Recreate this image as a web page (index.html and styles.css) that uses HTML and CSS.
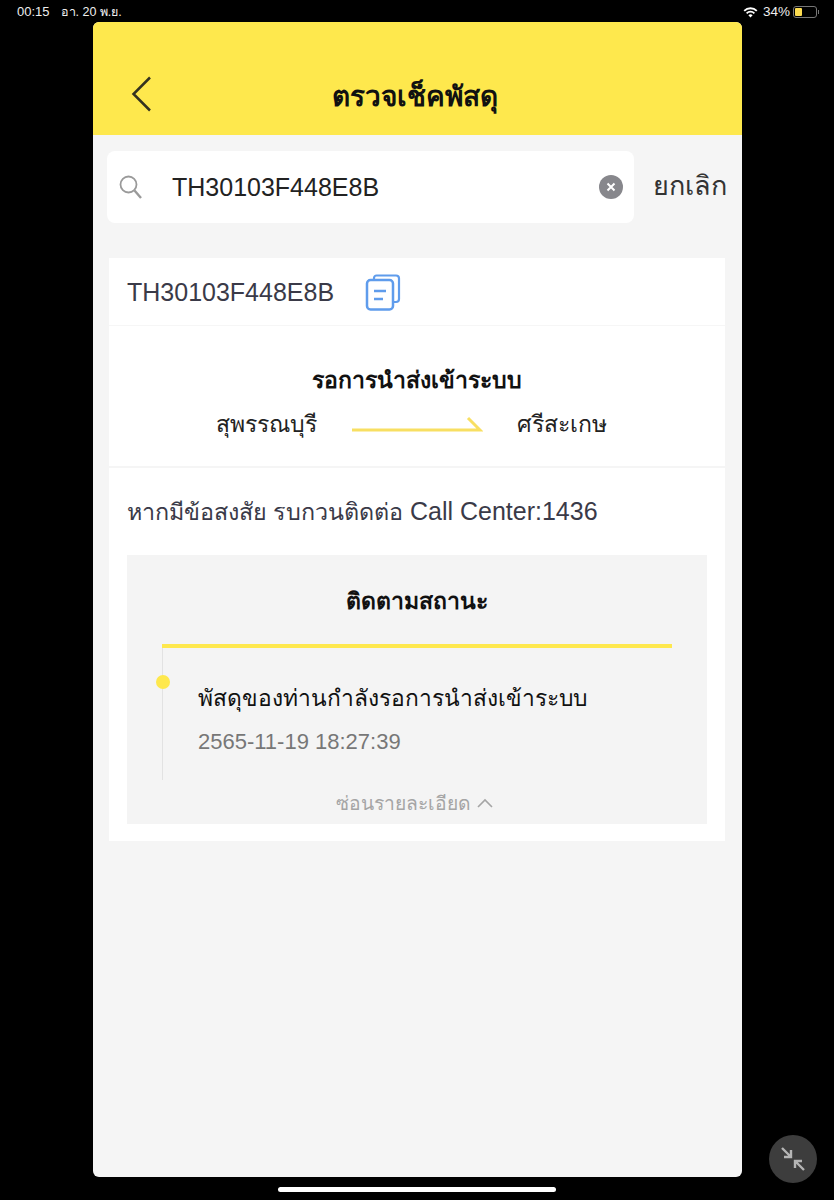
FILE: index.html
```html
<!DOCTYPE html>
<html lang="th">
<head>
  <meta charset="UTF-8">
  <meta name="viewport" content="width=device-width, initial-scale=1">
  <title>ตรวจเช็คพัสดุ</title>
  <link rel="stylesheet" href="styles.css">
</head>
<body>
  <div class="status-bar">
    <div class="status-left">
      <span class="time">00:15</span>
      <span class="date">อา. 20 พ.ย.</span>
    </div>
    <div class="status-right">
      <svg class="wifi" width="15" height="11" viewBox="0 0 15 11"><path d="M7.5 10.6 5.4 8.2a3 3 0 0 1 4.2 0z" fill="#fff"/><path d="M3.6 6.3a5.6 5.6 0 0 1 7.8 0M1.2 3.8a9 9 0 0 1 12.6 0" fill="none" stroke="#fff" stroke-width="1.8"/></svg>
      <span class="battery-text">34%</span>
      <div class="battery"><div class="battery-level"></div></div>
      <div class="battery-tip"></div>
    </div>
  </div>

  <div class="app">
    <div class="header">
      <svg class="back" width="22" height="36" viewBox="0 0 22 36"><path d="M19 1.500 2.500 18 19 34.500" fill="none" stroke="#33321f" stroke-width="2.500"/></svg>
      <h1>ตรวจเช็คพัสดุ</h1>
    </div>

    <div class="search-row">
      <div class="search-box">
        <svg class="search-icon" width="26" height="26" viewBox="0 0 26 26"><circle cx="10.500" cy="10.500" r="8" fill="none" stroke="#9a9a9a" stroke-width="1.800"/><path d="M16.500 16.500 23 24" stroke="#9a9a9a" stroke-width="2.400"/></svg>
        <span class="search-value">TH30103F448E8B</span>
        <div class="clear-btn">
          <svg width="12" height="12" viewBox="0 0 12 12"><path d="M2.500 2.500l7 7M9.500 2.500l-7 7" stroke="#fff" stroke-width="2"/></svg>
        </div>
      </div>
      <span class="cancel">ยกเลิก</span>
    </div>

    <div class="card">
      <div class="track-row">
        <span class="track-no">TH30103F448E8B</span>
        <svg class="copy-icon" width="36" height="37" viewBox="0 0 36 37">
          <path d="M9 5.500V4a2.500 2.500 0 0 1 2.500-2.500H31a3 3 0 0 1 3 3V25a3 3 0 0 1-3 3h-2" fill="none" stroke="#5f9cec" stroke-width="2.200"/>
          <rect x="2" y="6" width="26" height="29.500" rx="3.500" fill="#fff" stroke="#5f9cec" stroke-width="2.500"/>
          <path d="M9 17h12M9 25h9" stroke="#5f9cec" stroke-width="2.500"/>
        </svg>
      </div>

      <div class="route">
        <div class="route-title">รอการนำส่งเข้าระบบ</div>
        <div class="route-line">
          <span class="city">สุพรรณบุรี</span>
          <svg class="arrow" width="132" height="20" viewBox="0 0 132 20"><path d="M1 15H129L117 3" fill="none" stroke="#f8df62" stroke-width="3"/></svg>
          <span class="city">ศรีสะเกษ</span>
        </div>
      </div>

      <div class="contact">หากมีข้อสงสัย รบกวนติดต่อ <span class="contact-en">Call Center:1436</span></div>

      <div class="tracking">
        <div class="tracking-title">ติดตามสถานะ</div>
        <div class="timeline">
          <div class="dot"></div>
          <div class="event-title">พัสดุของท่านกำลังรอการนำส่งเข้าระบบ</div>
          <div class="event-time">2565-11-19 18:27:39</div>
        </div>
        <div class="toggle">ซ่อนรายละเอียด
          <svg width="16" height="10" viewBox="0 0 16 10"><path d="M1 9 8 2l7 7" fill="none" stroke="#a5a5a5" stroke-width="1.600"/></svg>
        </div>
      </div>
    </div>
  </div>

  <div class="home-bar"></div>

  <div class="float-btn">
    <svg width="26" height="26" viewBox="0 0 26 26">
      <path d="M2 2 10.500 10.500M4 11H11V4" fill="none" stroke="#b5b5b5" stroke-width="2.400"/>
      <path d="M24 24 15.500 15.500M15 22V15H22" fill="none" stroke="#b5b5b5" stroke-width="2.400"/>
    </svg>
  </div>
</body>
</html>
```

FILE: styles.css
```css
html, body {
  height: 100%;
}
body {
  margin: 0;
  background: #000;
  color: #111;
  font-family: 'Liberation Sans', 'Noto Sans', sans-serif;
  overflow: hidden;
  position: relative;
}
.status-bar {
  height: 22px;
  padding: 2px 15px 0 17px;
  box-sizing: border-box;
  display: flex;
  justify-content: space-between;
  align-items: center;
  color: #eee;
  font-size: 12px;
  line-height: 16px;
}
.status-left {
  display: flex;
  align-items: center;
  gap: 11px;
}
.time {
  font-size: 13px;
}
.date {
  font-size: 12.500px;
}
.status-right {
  display: flex;
  align-items: center;
}
.wifi {
  margin-right: 5px;
}
.battery-text {
  font-size: 13.500px;
  margin-right: 3px;
}
.battery {
  width: 24px;
  height: 12px;
  box-sizing: border-box;
  border: 1px solid #777;
  border-radius: 3px;
  padding: 1px;
}
.battery-level {
  width: 7px;
  height: 100%;
  background: #fddc50;
  border-radius: 1px;
}
.battery-tip {
  width: 1px;
  height: 4px;
  background: #777;
  margin-left: 1px;
}
.app {
  width: 649px;
  height: 1155px;
  margin-left: 93px;
  background: #f5f5f5;
  border-radius: 6px;
  overflow: hidden;
}
.header {
  height: 113px;
  padding-right: 5px;
  box-sizing: border-box;
  background: #fee84d;
  display: flex;
  align-items: center;
  justify-content: center;
  position: relative;
}
.header h1 {
  margin: 34px 0 0;
  font-size: 28px;
  font-weight: bold;
  color: #111;
}
.back {
  position: absolute;
  left: 38px;
  top: 54px;
}
.search-row {
  display: flex;
  align-items: center;
  margin: 16px 15px 0 14px;
}
.search-box {
  width: 527px;
  height: 72px;
  background: #fff;
  border-radius: 8px;
  display: flex;
  align-items: center;
  padding: 0 11px;
  box-sizing: border-box;
}
.search-icon {
  flex: none;
}
.search-value {
  flex: 1;
  margin-left: 28px;
  font-size: 25px;
  color: #222;
}
.clear-btn {
  width: 24px;
  height: 24px;
  border-radius: 50%;
  background: #87878c;
  display: flex;
  align-items: center;
  justify-content: center;
}
.cancel {
  margin: -4px 0 0 auto;
  font-size: 27px;
  color: #333;
}
.card {
  width: 616px;
  height: 583px;
  margin: 35px 0 0 16px;
  background: #fff;
  box-sizing: border-box;
}
.track-row {
  height: 68px;
  padding-left: 18px;
  display: flex;
  align-items: center;
  gap: 31px;
  border-bottom: 1px solid #f6f6f6;
  box-sizing: border-box;
}
.track-no {
  margin-top: 2px;
  font-size: 25px;
  color: #3a3a48;
}
.copy-icon {
  margin-top: 2px;
}
.route {
  height: 142px;
  padding-top: 36px;
  box-sizing: border-box;
  border-bottom: 2px solid #f5f5f5;
}
.route-title {
  text-align: center;
  font-size: 23px;
  font-weight: bold;
  line-height: 36px;
  color: #111;
}
.route-line {
  display: flex;
  justify-content: center;
  align-items: center;
  gap: 34px;
  margin-top: 8px;
  padding-right: 12px;
}
.city {
  font-size: 23px;
  color: #222;
}
.arrow {
  margin-top: 1px;
}
.contact {
  height: 87px;
  padding: 25px 0 0 18px;
  box-sizing: border-box;
  font-size: 23.300px;
  color: #3a3a48;
}
.contact-en {
  font-size: 25px;
}
.tracking {
  width: 580px;
  height: 269px;
  margin-left: 18px;
  background: #f4f4f4;
  box-sizing: border-box;
  padding: 0 35px;
}
.tracking-title {
  height: 93px;
  padding-top: 28px;
  box-sizing: border-box;
  text-align: center;
  font-size: 23px;
  font-weight: bold;
  color: #111;
  border-bottom: 4px solid #fee84d;
}
.timeline {
  height: 132px;
  padding: 32px 0 0 35px;
  box-sizing: border-box;
  border-left: 1px solid #e2e2e2;
  position: relative;
}
.dot {
  position: absolute;
  left: -7px;
  top: 27px;
  width: 14px;
  height: 14px;
  border-radius: 50%;
  background: #fee84d;
}
.event-title {
  font-size: 22.800px;
  line-height: 36px;
  color: #111;
}
.event-time {
  margin-top: 13px;
  font-size: 22px;
  color: #777;
}
.toggle {
  display: flex;
  justify-content: center;
  align-items: center;
  gap: 6px;
  margin-top: 8px;
  padding-right: 6px;
  font-size: 19.300px;
  color: #a5a5a5;
}
.home-bar {
  width: 278px;
  height: 5px;
  margin: 10px 0 0 278px;
  background: #fff;
  border-radius: 3px;
}
.float-btn {
  position: absolute;
  left: 769px;
  top: 1135px;
  width: 48px;
  height: 48px;
  border-radius: 50%;
  background: #3d3d3d;
  display: flex;
  align-items: center;
  justify-content: center;
}
```
